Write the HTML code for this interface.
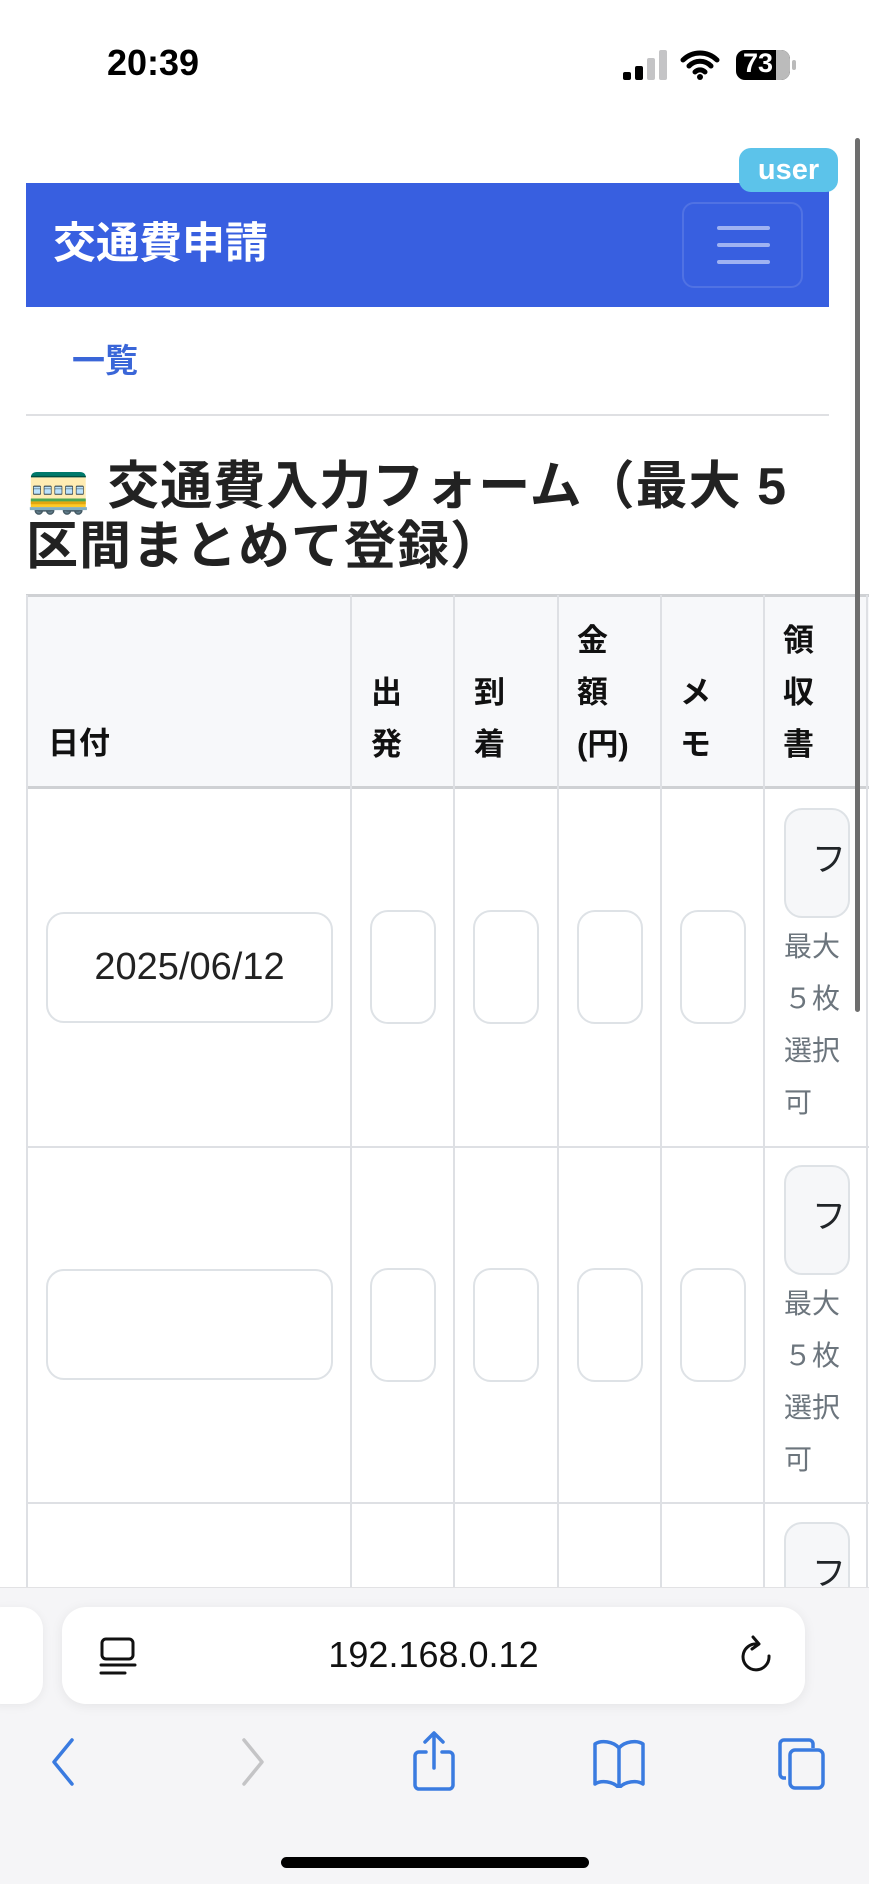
<!DOCTYPE html>
<html><head><meta charset="utf-8">
<style>
*{margin:0;padding:0;box-sizing:border-box}
body{width:869px;height:1884px;background:#fff;position:relative;overflow:hidden;font-family:"Liberation Sans","Noto Sans CJK JP",sans-serif;color:#212529}
.a{position:absolute}
.vl{position:absolute;width:2px;background:#dee0e4}
.hl{position:absolute;height:2px;background:#dee0e4;left:26px;width:843px}
.inp{position:absolute;border:2px solid #dee2e6;border-radius:18px;background:#fff}
.fb{position:absolute;border:2px solid #dee2e6;border-radius:18px;background:#f6f7f9;overflow:hidden;font-size:34px;line-height:100px;text-align:right;padding-right:2px;color:#212529}
.hint{position:absolute;left:784px;font-size:28px;color:#6c757d;line-height:52px;width:70px}
.th{position:absolute;font-size:31px;font-weight:bold;line-height:52px;color:#111}
</style></head><body>
<!-- status bar -->
<div class="a" style="left:107px;top:42px;font-size:36px;font-weight:bold;color:#000">20:39</div>
<div class="a" style="left:623px;top:72px;width:8px;height:8px;background:#000;border-radius:2px"></div>
<div class="a" style="left:635px;top:66px;width:8px;height:14px;background:#000;border-radius:2px"></div>
<div class="a" style="left:647px;top:58px;width:8px;height:22px;background:#c4c4c6;border-radius:2px"></div>
<div class="a" style="left:659px;top:50px;width:8px;height:30px;background:#c4c4c6;border-radius:2px"></div>
<svg class="a" style="left:680px;top:48px" width="40" height="32" viewBox="0 0 40 32"><path d="M3 12a24 24 0 0 1 34 0M9 18a15 15 0 0 1 22 0M15 24a7 7 0 0 1 10 0" stroke="#000" stroke-width="5" fill="none" stroke-linecap="round"/><circle cx="20" cy="29" r="3" fill="#000"/></svg>
<div class="a" style="left:736px;top:50px;width:54px;height:30px;background:#000;border-radius:9px;overflow:hidden"><div style="position:absolute;right:0;top:0;width:14px;height:30px;background:#bbb"></div><div style="position:absolute;left:7px;top:-2px;font-size:27px;font-weight:bold;color:#fff">73</div></div>
<div class="a" style="left:792px;top:60px;width:4px;height:10px;background:#bbb;border-radius:2px"></div>
<!-- navbar -->
<div class="a" style="left:26px;top:183px;width:803px;height:124px;background:#385fe0"></div>
<div class="a" style="left:53px;top:218px;font-size:43px;font-weight:bold;color:#fff;line-height:52px">交通費申請</div>
<div class="a" style="left:682px;top:202px;width:121px;height:86px;border:2px solid rgba(255,255,255,0.12);border-radius:12px"></div>
<div class="a" style="left:717px;top:226px;width:53px;height:4px;background:#9fb2f2;border-radius:2px"></div>
<div class="a" style="left:717px;top:243px;width:53px;height:4px;background:#9fb2f2;border-radius:2px"></div>
<div class="a" style="left:717px;top:260px;width:53px;height:4px;background:#9fb2f2;border-radius:2px"></div>
<div class="a" style="left:739px;top:148px;width:99px;height:44px;background:#5cc3ea;border-radius:12px;color:#fff;font-weight:bold;font-size:29px;text-align:center;line-height:44px">user</div>
<!-- link -->
<div class="a" style="left:72px;top:340px;font-size:33px;font-weight:bold;color:#3a66d8;line-height:42px">一覧</div>
<div class="a" style="left:26px;top:414px;width:803px;height:2px;background:#dfe0e3"></div>
<!-- heading -->
<div class="a" style="left:26px;top:457px;font-size:52px;font-weight:bold;line-height:60px;color:#222;width:820px;letter-spacing:1px">🚃 交通費入力フォーム（最大 5<br>区間まとめて登録）</div>
<!-- table -->
<div class="a" style="left:26px;top:595px;width:843px;height:193px;background:#f7f8fa"></div>
<div class="hl" style="top:594px;background:#cfd1d4;height:3px"></div>
<div class="hl" style="top:786px;background:#cfd1d4;height:3px"></div>
<div class="hl" style="top:1146px"></div>
<div class="hl" style="top:1502px"></div>
<div class="vl" style="left:26px;top:595px;height:1000px"></div>
<div class="vl" style="left:350px;top:595px;height:1000px"></div>
<div class="vl" style="left:453px;top:595px;height:1000px"></div>
<div class="vl" style="left:557px;top:595px;height:1000px"></div>
<div class="vl" style="left:660px;top:595px;height:1000px"></div>
<div class="vl" style="left:763px;top:595px;height:1000px"></div>
<div class="vl" style="left:866px;top:595px;height:1000px"></div>
<div class="th" style="left:48px;top:718px">日付</div>
<div class="th" style="left:371px;top:667px">出<br>発</div>
<div class="th" style="left:474px;top:667px">到<br>着</div>
<div class="th" style="left:577px;top:615px">金<br>額<br>(円)</div>
<div class="th" style="left:680px;top:667px">メ<br>モ</div>
<div class="th" style="left:783px;top:615px">領<br>収<br>書</div>
<!-- row1 -->
<div class="inp" style="left:46px;top:912px;width:287px;height:111px;font-size:38px;line-height:107px;text-align:center;color:#222">2025/06/12</div>
<div class="inp" style="left:370px;top:910px;width:66px;height:114px"></div>
<div class="inp" style="left:473px;top:910px;width:66px;height:114px"></div>
<div class="inp" style="left:577px;top:910px;width:66px;height:114px"></div>
<div class="inp" style="left:680px;top:910px;width:66px;height:114px"></div>
<div class="fb" style="left:784px;top:808px;width:66px;height:110px">フ</div>
<div class="hint" style="top:921px">最大<br>５枚<br>選択<br>可</div>
<!-- row2 -->
<div class="inp" style="left:46px;top:1269px;width:287px;height:111px"></div>
<div class="inp" style="left:370px;top:1268px;width:66px;height:114px"></div>
<div class="inp" style="left:473px;top:1268px;width:66px;height:114px"></div>
<div class="inp" style="left:577px;top:1268px;width:66px;height:114px"></div>
<div class="inp" style="left:680px;top:1268px;width:66px;height:114px"></div>
<div class="fb" style="left:784px;top:1165px;width:66px;height:110px">フ</div>
<div class="hint" style="top:1278px">最大<br>５枚<br>選択<br>可</div>
<!-- row3 -->
<div class="fb" style="left:784px;top:1522px;width:66px;height:110px">フ</div>
<!-- scrollbar -->
<div class="a" style="left:855px;top:138px;width:5px;height:874px;background:#6e6e6e;border-radius:3px;z-index:5"></div>
<!-- bottom toolbar -->
<div class="a" style="left:0;top:1587px;width:869px;height:297px;background:#f5f5f7;border-top:1px solid #e2e2e4;z-index:6"></div>
<div style="position:absolute;left:0;top:0;width:869px;height:1884px;z-index:7">
<div class="a" style="left:-20px;top:1607px;width:63px;height:97px;background:#fff;border-radius:22px;box-shadow:0 2px 10px rgba(0,0,0,0.06)"></div>
<div class="a" style="left:62px;top:1607px;width:743px;height:97px;background:#fff;border-radius:24px;box-shadow:0 2px 12px rgba(0,0,0,0.07)"></div>
<svg class="a" style="left:98px;top:1637px" width="40" height="40" viewBox="0 0 40 40"><rect x="4" y="2" width="31" height="20" rx="4" stroke="#111" stroke-width="3" fill="none"/><path d="M3 28h34M3 36h24" stroke="#111" stroke-width="3" stroke-linecap="round"/></svg>
<div class="a" style="left:62px;top:1630px;width:743px;text-align:center;font-size:36px;color:#111;line-height:50px">192.168.0.12</div>
<svg class="a" style="left:738px;top:1634px" width="36" height="44" viewBox="0 0 36 44"><path d="M20 10A13 13 0 1 0 31 22" stroke="#111" stroke-width="3" fill="none" stroke-linecap="round"/><path d="M15 3l6 7-7 5" stroke="#111" stroke-width="3" fill="none" stroke-linecap="round" stroke-linejoin="round"/></svg>
<svg class="a" style="left:48px;top:1736px" width="30" height="50" viewBox="0 0 30 50"><path d="M24 4L6 26l18 22" stroke="#3a7be0" stroke-width="3.5" fill="none" stroke-linecap="round" stroke-linejoin="round"/></svg>
<svg class="a" style="left:238px;top:1736px" width="30" height="50" viewBox="0 0 30 50"><path d="M6 4l18 22L6 48" stroke="#c4c4c6" stroke-width="3.5" fill="none" stroke-linecap="round" stroke-linejoin="round"/></svg>
<svg class="a" style="left:410px;top:1730px" width="48" height="62" viewBox="0 0 48 62"><path d="M16 22H9a4 4 0 0 0-4 4v29a4 4 0 0 0 4 4h30a4 4 0 0 0 4-4V26a4 4 0 0 0-4-4h-7" stroke="#3a7be0" stroke-width="3.5" fill="none" stroke-linecap="round"/><path d="M24 38V4M15 12l9-9 9 9" stroke="#3a7be0" stroke-width="3.5" fill="none" stroke-linecap="round" stroke-linejoin="round"/></svg>
<svg class="a" style="left:591px;top:1738px" width="56" height="50" viewBox="0 0 56 50"><path d="M28 10C22 3 10 2 4 6v40c6-4 18-3 24 4 6-7 18-8 24-4V6c-6-4-18-3-24 4zM28 10v38" stroke="#3a7be0" stroke-width="3.5" fill="none" stroke-linejoin="round"/></svg>
<svg class="a" style="left:776px;top:1736px" width="52" height="56" viewBox="0 0 52 56"><path d="M10 42H8a4 4 0 0 1-4-4V8a4 4 0 0 1 4-4h25a4 4 0 0 1 4 4v4" stroke="#3a7be0" stroke-width="3.5" fill="none"/><rect x="14" y="14" width="33" height="38" rx="5" stroke="#3a7be0" stroke-width="3.5" fill="none"/></svg>
<div class="a" style="left:281px;top:1857px;width:308px;height:11px;background:#000;border-radius:6px"></div>
</div>
</body></html>
